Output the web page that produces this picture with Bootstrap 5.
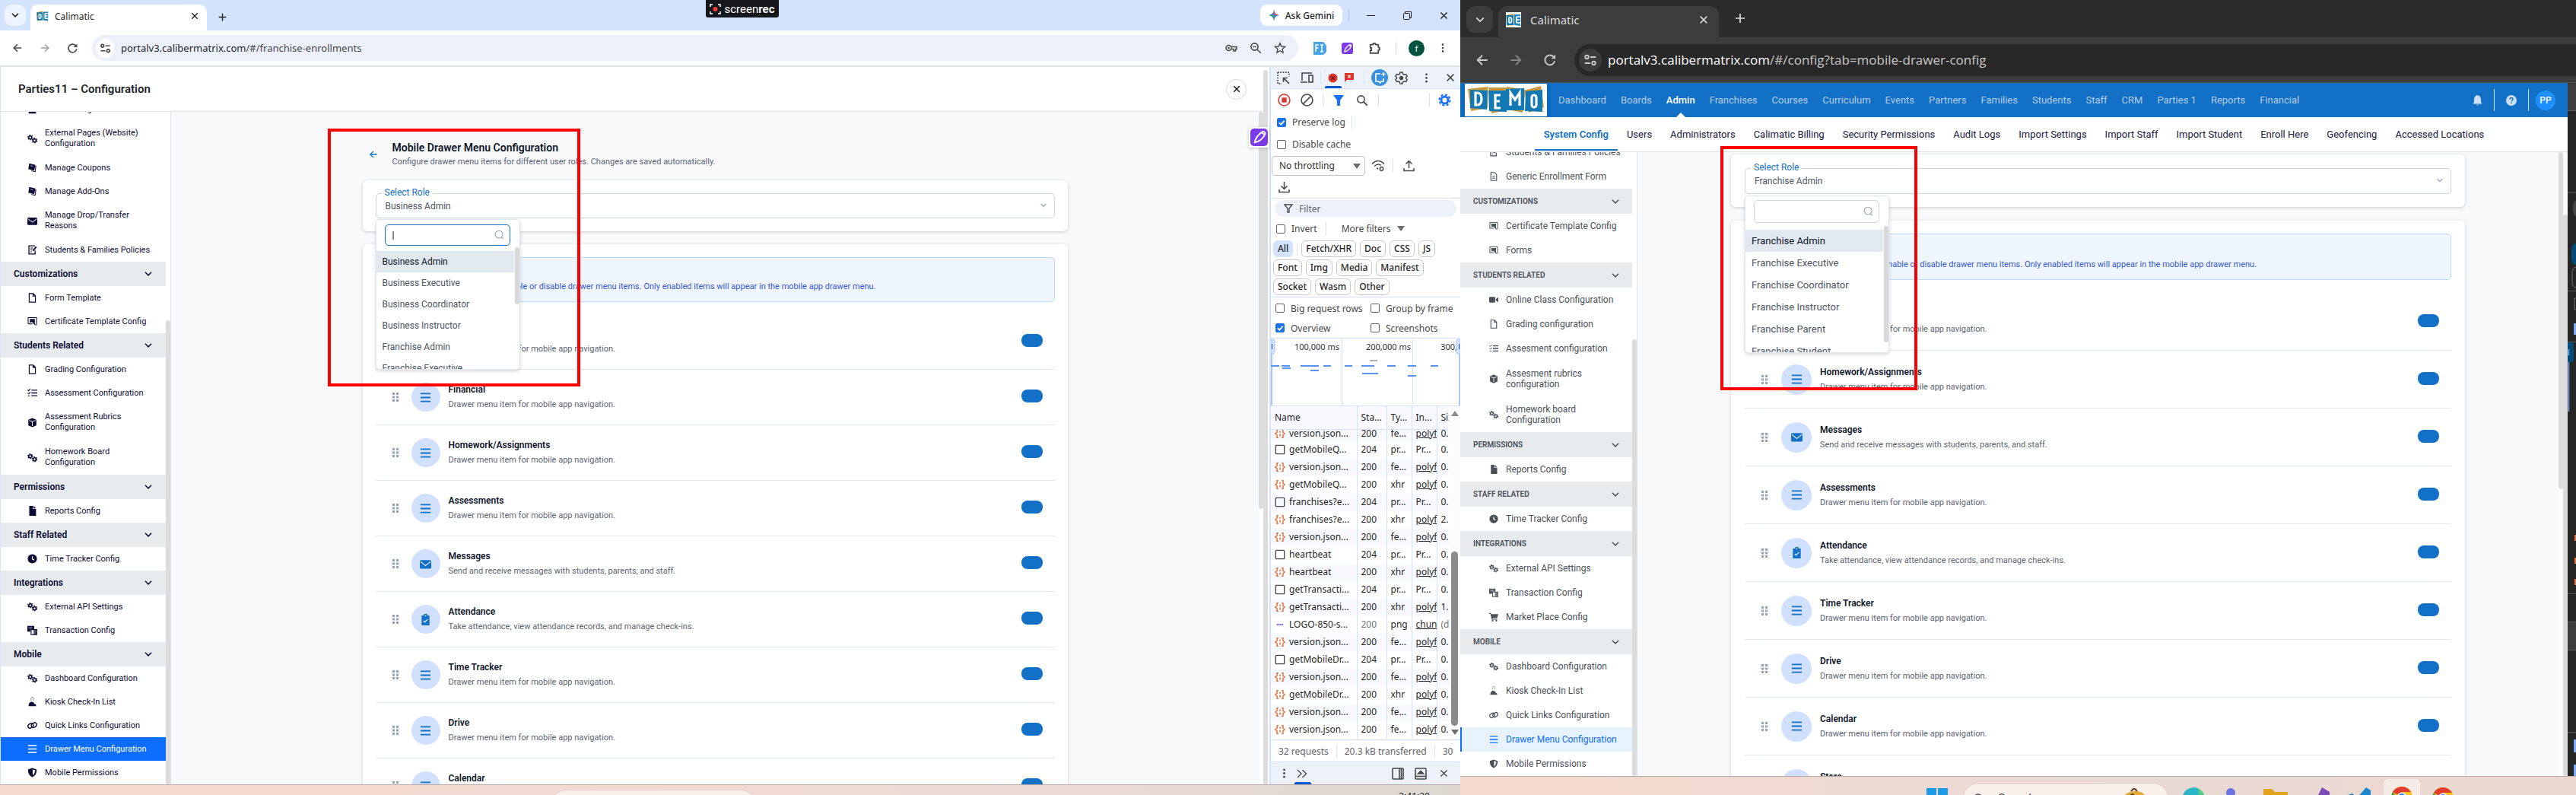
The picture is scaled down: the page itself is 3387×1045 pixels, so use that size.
<!DOCTYPE html>
<html lang="en">
<head>
<meta charset="utf-8">
<meta name="viewport" content="width=device-width, initial-scale=1">
<title>Calimatic</title>
<link href="https://cdn.jsdelivr.net/npm/bootstrap@5.3.0/dist/css/bootstrap.min.css" rel="stylesheet">
<style>
:root{--app:Roboto,"Liberation Sans",sans-serif;--ui:"Noto Sans","Open Sans",sans-serif;--brand:#1270c6;--line:#e2e8f0;--thumb:#dcdcdc}
body{height:100vh;overflow:hidden;font-family:var(--app);color:#111827}
svg{display:block;flex:none}
button{line-height:1}
.ic{width:20px;height:20px}
.ic-sm{width:16px;height:16px}
.icon-btn{display:flex;align-items:center;justify-content:center;width:24px;height:24px;padding:0;border:0;background:none;color:inherit;flex:none}
.window-a{flex:1920 1 0}
.window-b{flex:1467 1 0}
.page{flex:1 1 0;min-height:0}

/* browser chrome, light */
.strip-a{height:40px;background:#d3e2fd;padding:6px 10px 0 6px;font:12px var(--ui);color:#1f1f1f}
.search-tab{width:28px;height:28px;border-radius:9px;background:#edf3ff}
.tab-a{width:232px;height:34px;margin-left:6px;padding:0 4px 4px 8px;border-radius:10px 10px 0 0;background:#fff}
.gemini{width:108px;height:28px;border-radius:9px;background:#fff;font-weight:500}
.tools-a{height:48px;padding:0 11px;border-bottom:2px solid #dfe3e8;font:13px var(--ui);color:#474747}
.omni-a{height:34px;border-radius:17px;background:#ecf0fa;padding:0 12px 0 5px;margin-left:14px}
.tune-a{width:25px;height:25px;border-radius:50%;background:#fff}
.rec-badge{left:928px;top:0;width:96px;height:23px;border-radius:0 0 3px 3px;background:#16171a;color:#fff;font:15px Roboto,sans-serif}
.avatar-f{width:21px;height:21px;border-radius:50%;background:#00523f;color:#fff;font-size:11px}

/* browser chrome, dark */
.strip-b{height:49px;background:#2b2b2b;padding:8px 8px 0;font:15px var(--ui);color:#dedede}
.search-tab-b{width:35px;height:35px;border-radius:11px;background:#3c3c3c}
.tab-b{width:290px;height:41px;margin-left:7px;padding:0 8px 6px 10px;border-radius:12px 12px 0 0;background:#3c3c3c}
.tools-b{height:60px;background:#3c3c3c;padding-left:17px;border-bottom:1px solid #4b4b4b;color:#c7c7c7}
.omni-b{height:42px;border-radius:21px 0 0 21px;background:#282828;margin-left:20px;padding-left:6px;font:17px "Open Sans",var(--ui);color:#c7c7c7}
.tune-b{width:30px;height:30px;border-radius:50%;background:#3c3c3c}

/* application */
.app-head{height:59px;padding:0 22px 0 23px;border-bottom:1px solid #dee2e6;border-left:1px solid #dbe4f3}
.app-head h1{font-size:15px;font-weight:600;line-height:20px;margin:0;color:#212529}
.round-close{width:27px;height:27px;border:1px solid #d5d8dd;border-radius:50%;color:#000}
.side{width:225px;flex:none;border-right:1px solid #dee2e6}
.side-a{border-left:1px solid #dbe4f3;color:#0b0b33}
.side-b{width:233px;color:#4a5058}
.side-list{overflow:hidden;margin:0;padding:0;list-style:none}
.side-head{flex:none;display:flex;align-items:center;justify-content:space-between;height:32px;padding:0 17px;background:#e8ebee;font-size:12px;font-weight:600}
.side-link{flex:none;display:flex;align-items:center;gap:10px;height:31px;padding-left:35px;font-size:11px;line-height:14px;color:inherit;text-decoration:none;white-space:nowrap}
.side-link svg{width:13px;height:13px}
.side-link.tall{height:46px}
.side-a .on{background:#0d6efd;color:#fff}
.side-b .side-head{height:33px;padding-right:16px;font-size:10px}
.side-b .side-link{height:32px;padding-left:38px;font-size:12px}
.side-b .side-link.tall{height:47px}
.side-b .side-link svg{width:12px;height:12px}
.side-b .on{background:#e7f2ff;color:#0d6efd;box-shadow:inset 2px 0 #0d6efd}
.track{width:6px;flex:none}
.thumb{width:6px;border-radius:3px;background:var(--thumb)}
.canvas-bg{background:#f8f9fb;overflow:hidden}
.wrap-a{max-width:927px}
.wrap-b{max-width:965px;padding-top:3px}
.panel{background:#fff;border-radius:6px;box-shadow:0 1px 4px rgba(0,0,0,.18);padding:17px}
.panel + .panel{margin-top:17px;padding-bottom:0}
.page-title{padding:37px 0 15px 7px;gap:18px}
.page-title h2{font-size:14px;line-height:20px;font-weight:600;margin:0;color:#0f172a}
.page-title p{font-size:11px;line-height:18px;margin:0;color:#596273}
.role-select{appearance:none;width:100%;height:33px;border:1px solid #cfd4de;border-radius:5px;background:#fff;padding:0 12px;font-size:12px;color:#4b5563}
.role-label{left:8px;top:-10px;padding:0 4px;background:#fff;color:var(--brand);font-size:12px;line-height:18px}
.role-arrow{right:10px;top:11px;width:10px;height:10px;color:#94a3b8}
.menu-pop{left:0;top:34px;width:190px;height:198px;z-index:3;background:#fff;border:1px solid var(--line);border-radius:5px;box-shadow:0 2px 5px rgba(0,0,0,.16);overflow:hidden}
.menu-pop input{width:100%;height:28px;border:1px solid #cfd4de;border-radius:5px;padding:0 28px 0 9px;font-size:12px;outline:0}
.menu-pop .find-box{padding:6px 12px 7px 11px}
.menu-pop .find-box svg{right:20px;top:13px;width:13px;height:13px;color:#94a3b8}
.menu-a input{border:1px solid var(--brand)}
.opts{list-style:none;margin:0;padding:0;font-size:12px;color:#4b5563}
.opts li{height:28px;line-height:28px;padding-left:8px}
.opts li.picked{margin-right:7px;background:#e2e8f0;color:#0f172a}
.menu-thumb{right:0;width:6px;border-radius:3px;background:#d9d9d9}
.menu-a .menu-thumb{top:36px;height:75px}
.info{height:59px;padding-top:19px;border:1px solid #bfdbfe;border-radius:5px;background:#eff6ff;margin-bottom:16px}
.info p{max-width:657px;text-align:right;font-size:11px;line-height:38px;height:38px;margin:0;color:#3558d4}
.item{height:73px;border-bottom:1px solid var(--line);padding:0 16px 0 22px}
.item .grip{width:8px;height:12px;color:#94a3b8;margin-right:17px}
.disc{width:38px;height:38px;border-radius:50%;background:#d0e0fd;color:var(--brand);margin-right:11px;flex:none}
.disc svg{width:15px;height:15px}
.item h3{font-size:12px;line-height:19px;font-weight:600;margin:0;color:#0f172a}
.item p{font-size:11px;line-height:19px;margin:0;color:#5b6473}
.item .form-check-input{width:28px;height:17px;margin:0 0 3px;border-radius:8px;border:0;background:var(--brand);flex:none}
.wrap-b .panel{padding:18px 18px 17px 18px}
.wrap-b .panel + .panel{margin-top:18px;padding-top:17px;padding-bottom:0}
.wrap-b .role-select{height:34px}
.wrap-b .menu-pop{top:36px;height:207px}
.wrap-b .menu-pop input{height:30px}
.wrap-b .find-box{padding:5px 12px 9px 11px}
.wrap-b .opts{font-size:13px}
.wrap-b .opts li{height:29px;line-height:29px}
.wrap-b .menu-thumb{top:39px;height:153px}
.wrap-b .info{height:61px;margin-bottom:17px}
.wrap-b .info p{max-width:672px;line-height:42px}
.wrap-b .item{height:76px}
.wrap-b .item .grip{margin-right:18px}
.wrap-b .disc{width:40px;height:40px}
.marker{z-index:5;border:4px solid #f00;pointer-events:none}
.marker-a{left:calc(50% - 509px);top:22px;width:332px;height:339px}
.marker-b{left:calc(50% - 497px);top:-8px;width:259px;height:321px}
.float-tool{right:0;top:79px;width:27px;height:27px;background:#fff;padding:2px;box-shadow:0 1px 4px rgba(0,0,0,.2)}

/* top navigation of the portal */
.topnav{height:45px;background:var(--brand);padding:0 16px 0 0;font-size:13px}
.logo-cell{width:119px;height:45px;background:#0b6cbf;padding:1px 0 1px 6px}
.topnav ul,.subnav ul{list-style:none;margin:0;padding:0}
.topnav .menu-a1{color:#b5cde8;text-decoration:none;line-height:45px;display:block}
.topnav .current{color:#fff;font-weight:500;position:relative}
.topnav .current::after{content:"";position:absolute;left:50%;bottom:0;margin-left:-6px;border:6px solid transparent;border-bottom-color:#fff;border-top:0}
.vr-line{width:1px;height:29px;background:#cfe0f3}
.user-dot{width:26px;height:26px;border-radius:50%;background:#1e90ff;color:#fff;font-size:12px;font-weight:500}
.subnav{height:46px;border-bottom:1px solid #dcdee1;font-size:13px}
.subnav a{display:block;padding:0 12px;line-height:45px;height:44px;color:#17173f;text-decoration:none}
.subnav .current{color:var(--brand);font-weight:600;border-bottom:2px solid var(--brand)}
.edge{width:11px;flex:none;background:#252525}

/* developer tools */
.dev{width:251px;flex:none;border-left:2px solid #d3e2fd;font:12px var(--ui);color:#1f1f1f}
.dev .rule{border-bottom:1px solid #d3e2fd}
.dev .sep{width:1px;height:17px;background:#d3e2fd;flex:none}
.dev-bar{height:29px;background:#edf1fa;color:#474747}
.dev-tabs{gap:9px;padding-left:8px}
.dev label,.dev .more{color:#474747;white-space:nowrap}
.dev .tick{appearance:none;width:12px;height:12px;border:1px solid #5f6368;border-radius:2px;margin:0 8px 0 0;flex:none;background:#fff}
.dev .tick:checked{border-color:#1a73e8;background:#1a73e8 url("data:image/svg+xml,%3Csvg xmlns='http://www.w3.org/2000/svg' viewBox='0 0 12 12'%3E%3Cpath d='M2.5 6l2.5 2.5L9.5 3.5' fill='none' stroke='white' stroke-width='1.8'/%3E%3C/svg%3E") center/11px no-repeat}
.throttle{appearance:none;width:123px;height:26px;border:1px solid #c0c3c8;border-radius:4px;padding:0 9px;background:#fff;font:12px var(--ui);color:#303030}
.filter-box{height:22px;border-radius:11px;background:#edf1fa;margin:2px 5px 0 5px;padding-left:12px}
.filter-box input{border:0;background:none;font:12px var(--ui);padding:0;outline:0;width:150px}
.filter-box input::placeholder{color:#5f6368;opacity:1}
.chip{height:22px;border:1px solid #c4c7cc;border-radius:6px;background:#fff;font:500 12px/18px var(--ui);padding:0 5px;color:#1f1f1f}
.chip.sel{background:#d3e2fd;border-color:#d3e2fd}
.net{table-layout:fixed;width:235px;border-collapse:collapse;margin:0}
.net th{font-weight:400;height:30px;background:#f8faff;border-bottom:1px solid #d3e2fd}
.net th,.net td{padding:0 0 0 5px;border-right:1px solid #d3e2fd;overflow:hidden;white-space:nowrap;line-height:20px}
.net th:last-child,.net td:last-child{border-right:0}
.net td{height:23px}
.net tbody tr:nth-child(odd){background:#f8faff}
.net tr.cut td{height:15px}
.net tr.cut td > div{height:15px;overflow:hidden;display:flex;align-items:flex-end!important}
.net a{color:#1f1f1f}
.net .file-ic{width:14px;height:14px;margin-right:5px}
.net tr.cut .file-ic{margin-bottom:3px}
.dev-scroll{width:15px;flex:none;background:#fcfcfc;padding:6px 3px}
.dev-scroll .bar-thumb{width:9px;height:229px;margin:auto 0 5px;border-radius:5px;background:#8b8b8b}
.arrow-up,.arrow-down{width:0;height:0;border:5px solid transparent}
.arrow-up{border-bottom:7px solid #8b8b8b;border-top:0}
.arrow-down{border-top:7px solid #6b6b6b;border-bottom:0}

/* taskbar */
.task-a{height:14px;border-top:1px solid #b9aaa7;background:linear-gradient(90deg,#f5dad0,#f3dbd3 45%,#e9d9d5 80%,#dcd8cf);overflow:hidden}
.task-b{height:25px;border-top:1px solid #b9aaa7;background:linear-gradient(90deg,#f6dacd,#f1dad2 25%,#e9d9d4 60%,#ecd8d0);overflow:hidden}
.task-pill{width:270px;height:40px;border-radius:20px;background:#f8efeb;border:1px solid #e2cfc8;margin-top:6px;font-size:16px;color:#555}
</style>
</head>
<body class="d-flex">
<svg width="0" height="0" class="position-absolute" aria-hidden="true">
<defs>
<symbol id="i-down" viewBox="0 0 16 16"><path d="M2.5 5l5.5 5.500L13.500 5" fill="none" stroke="currentColor" stroke-width="1.900"/></symbol>
<symbol id="i-x" viewBox="0 0 16 16"><path d="M3 3l10 10M13 3L3 13" fill="none" stroke="currentColor" stroke-width="1.700"/></symbol>
<symbol id="i-plus" viewBox="0 0 16 16"><path d="M8 2v12M2 8h12" fill="none" stroke="currentColor" stroke-width="1.700"/></symbol>
<symbol id="i-back" viewBox="0 0 16 16"><path d="M14 8H3M8 2.500L2.500 8L8 13.500" fill="none" stroke="currentColor" stroke-width="1.800"/></symbol>
<symbol id="i-fwd" viewBox="0 0 16 16"><path d="M2 8h11M8 2.500L13.500 8L8 13.500" fill="none" stroke="currentColor" stroke-width="1.800"/></symbol>
<symbol id="i-reload" viewBox="0 0 16 16"><path d="M13.500 9A5.700 5.700 0 1 1 12 4l2 2" fill="none" stroke="currentColor" stroke-width="1.700"/><path d="M14.300 1.500v5h-5z" fill="currentColor"/></symbol>
<symbol id="i-tune" viewBox="0 0 16 16"><g fill="none" stroke="currentColor" stroke-width="1.700"><circle cx="4" cy="4.500" r="2"/><path d="M8 4.500h6.500M1.500 11.500H8"/><circle cx="12" cy="11.500" r="2"/></g></symbol>
<symbol id="i-dots" viewBox="0 0 16 16"><g fill="currentColor"><circle cx="8" cy="3" r="1.500"/><circle cx="8" cy="8" r="1.500"/><circle cx="8" cy="13" r="1.500"/></g></symbol>
<symbol id="i-search" viewBox="0 0 16 16"><circle cx="6.500" cy="6.500" r="4.600" fill="none" stroke="currentColor" stroke-width="1.600"/><path d="M10 10l4.700 4.700" stroke="currentColor" stroke-width="1.800"/></symbol>
<symbol id="i-zoomout" viewBox="0 0 16 16"><circle cx="6.500" cy="6.500" r="4.600" fill="none" stroke="currentColor" stroke-width="1.600"/><path d="M10 10l4.700 4.700M4.500 6.500h4" stroke="currentColor" stroke-width="1.600"/></symbol>
<symbol id="i-lens" viewBox="0 0 16 16"><circle cx="7.500" cy="7.500" r="6" fill="none" stroke="currentColor" stroke-width="1.300"/><path d="M11.500 12l3 3" stroke="currentColor" stroke-width="1.400"/></symbol>
<symbol id="i-star" viewBox="0 0 16 16"><path d="M8 1.800l1.800 4.200 4.700.4-3.500 3.100 1 4.600-4-2.400-4 2.400 1-4.600L1.500 6.400l4.700-.4z" fill="none" stroke="currentColor" stroke-width="1.400"/></symbol>
<symbol id="i-key" viewBox="0 0 16 16"><g fill="none" stroke="currentColor" stroke-width="1.500"><circle cx="4.500" cy="8" r="3.500"/><path d="M8 6.500h7v3h-1.500v2.500h-2.500V9.500H8"/></g><circle cx="4.500" cy="8" r="1.300" fill="currentColor"/></symbol>
<symbol id="i-puzzle" viewBox="0 0 16 16"><path d="M2.500 3.500H6V2h3v1.500h3.500V7H14v3h-1.500v4h-10v-3.500H4v-3H2.500z" fill="none" stroke="currentColor" stroke-width="1.600" stroke-linejoin="round"/></symbol>
<symbol id="i-gears" viewBox="0 0 16 16"><g fill="none" stroke="currentColor"><circle cx="4.600" cy="5.800" r="2.400" stroke-width="1.900"/><circle cx="4.600" cy="5.800" r="3.800" stroke-width="1.500" stroke-dasharray="1.990 1.990"/><circle cx="11.600" cy="10.800" r="2.400" stroke-width="1.900"/><circle cx="11.600" cy="10.800" r="3.800" stroke-width="1.500" stroke-dasharray="1.990 1.990"/></g></symbol>
<symbol id="i-ticket" viewBox="0 0 16 16"><path d="M3 1l10 2.500-2 9L1.500 10z" fill="currentColor"/><path d="M13 4.500l1.500.5-1.500 10-7-1.500.5-1 5.500 1z" fill="currentColor"/><path d="M5 4.500l4 1" stroke="#fff" stroke-width=".8"/></symbol>
<symbol id="i-mail" viewBox="0 0 16 16"><rect y="2.500" width="16" height="12" rx="1.800" fill="currentColor"/><path d="M1 4.500l7 5.500 7-5.500" fill="none" stroke="#d9e5fb" stroke-width="1.300"/></symbol>
<symbol id="i-edit" viewBox="0 0 16 16"><path d="M12.500 9v5.500h-10v-13h10" fill="none" stroke="currentColor" stroke-width="1.600"/><path d="M5 5h4M5 8h3M5 11h2" stroke="currentColor" stroke-width="1.300"/><path d="M14.500 3L9 9.500" stroke="currentColor" stroke-width="2.400"/></symbol>
<symbol id="i-file" viewBox="0 0 16 16"><path d="M3 1h6.500L13 4.500V15H3zM9.200 1v4H13" fill="none" stroke="currentColor" stroke-width="1.500"/></symbol>
<symbol id="i-doc" viewBox="0 0 16 16"><path d="M3 1h6.500L13 4.500V15H3zM5.500 8h5M5.500 11h5" fill="none" stroke="currentColor" stroke-width="1.500"/></symbol>
<symbol id="i-filesolid" viewBox="0 0 16 16"><path d="M3 0h6v5h5v11H3zM10 0l4 4h-4z" fill="currentColor"/></symbol>
<symbol id="i-cert" viewBox="0 0 16 16"><path d="M1.200 12V1.800h13.600V14" fill="none" stroke="currentColor" stroke-width="1.300"/><path d="M1.200 12h7" stroke="currentColor" stroke-width="1.300"/><path d="M4 4h8v7l2 4-4-3-2-3-4 1z" fill="currentColor"/></symbol>
<symbol id="i-check" viewBox="0 0 16 16"><path d="M6.500 3.500H16M6.500 8H16M6.500 12.500H16" stroke="currentColor" stroke-width="1.700"/><path d="M.5 3l1.500 1.500L5 1.500M.5 8L2 9.500l3-3M1 12.500h3" fill="none" stroke="currentColor" stroke-width="1.300"/></symbol>
<symbol id="i-cube" viewBox="0 0 16 16"><path d="M8 .5l6.500 2.800v9.200L8 15.500l-6.500-3V3.300z" fill="currentColor"/><path d="M3 4.500l5 2 5-2M8 6.500v7" fill="none" stroke="#fff" stroke-width="1.200"/></symbol>
<symbol id="i-clock" viewBox="0 0 16 16"><circle cx="8" cy="8" r="7.500" fill="currentColor"/><path d="M8 4v4.500l3 1.500" fill="none" stroke="#fff" stroke-width="1.500"/></symbol>
<symbol id="i-trans" viewBox="0 0 16 16"><path d="M0 1h11v5H5v4H0z" fill="currentColor"/><path d="M2 4h6" stroke="#fff"/><path d="M6 7h9.500v8H6z" fill="none" stroke="currentColor" stroke-width="1.400"/><path d="M10 7h5v8h-5z" fill="currentColor" opacity=".7"/></symbol>
<symbol id="i-person" viewBox="0 0 16 16"><path d="M6 6V2.500a2 2 0 0 1 4 0V6" fill="none" stroke="currentColor" opacity=".6"/><path d="M2 15c0-5 2.500-7 5-7s3.500 1 4 3l3 1.500V15z" fill="currentColor"/></symbol>
<symbol id="i-link" viewBox="0 0 16 16"><g fill="none" stroke="currentColor" stroke-width="1.700"><rect x="1" y="5.500" width="9" height="6.500" rx="3.200" transform="rotate(-35 5 9)"/><rect x="6" y="4" width="9" height="6.500" rx="3.200" transform="rotate(-35 11 7)"/></g></symbol>
<symbol id="i-bars" viewBox="0 0 16 16"><path d="M1 2.500h14M1 8h14M1 13.500h14" stroke="currentColor" stroke-width="1.900"/></symbol>
<symbol id="i-shield" viewBox="0 0 16 16"><path d="M8 .5L15 3c0 6-2 10-7 12.500C3 13 1 9 1 3z" fill="currentColor"/><path d="M8.500 3l4 1.300c-.2 3.500-1.500 6.500-4 8.200z" fill="#fff"/></symbol>
<symbol id="i-cart" viewBox="0 0 16 16"><path d="M0 1h3l.5 2H16l-2 6.500H5.500L5.800 11H14v1.500H4.500L2.200 2.500H0z" fill="currentColor"/><circle cx="6" cy="14.500" r="1.500" fill="currentColor"/><circle cx="12.500" cy="14.500" r="1.500" fill="currentColor"/></symbol>
<symbol id="i-video" viewBox="0 0 16 16"><rect y="3" width="10.500" height="10" rx="1.500" fill="currentColor"/><path d="M11.500 7L16 3.500v9L11.500 9z" fill="currentColor"/></symbol>
<symbol id="i-clip" viewBox="0 0 16 16"><path d="M2.500 2h3a2.500 2.500 0 0 1 5 0h3v14h-11z" fill="currentColor"/><path d="M5 9.500l2 2 4-4" fill="none" stroke="#d0e0fd" stroke-width="1.500"/><circle cx="8" cy="2.500" r="1" fill="#d0e0fd"/></symbol>
<symbol id="i-grip" viewBox="0 0 8 12"><path d="M0 0h3v3H0zM5 0h3v3H5zM0 4.500h3v3H0zM5 4.500h3v3H5zM0 9h3v3H0zM5 9h3v3H5z" fill="currentColor"/></symbol>
<symbol id="i-pen" viewBox="0 0 24 24"><rect width="24" height="24" rx="5" fill="#7c3aed"/><path d="M6 19c1-7 5-11 11-15 3 0 4 2 3 4-3 6-7 10-14 11zM15 5l5 4" fill="none" stroke="#fff" stroke-width="2"/></symbol>
<symbol id="i-gear" viewBox="0 0 16 16"><circle cx="8" cy="8" r="4.200" fill="none" stroke="currentColor" stroke-width="2.600"/><circle cx="8" cy="8" r="6.600" fill="none" stroke="currentColor" stroke-width="2" stroke-dasharray="2.960 2.225"/></symbol>
<symbol id="i-geart" viewBox="0 0 16 16"><path d="M6.500 1h3l.5 2 1.700 1 2-.6 1.500 2.600L13.700 7.500v1l1.500 1.500-1.500 2.600-2-.6-1.700 1-.5 2h-3L6 13l-1.700-1-2 .6L.8 10l1.500-1.500v-1L.8 6l1.500-2.600 2 .6L6 3z" fill="none" stroke="currentColor" stroke-width="1.400"/><circle cx="8" cy="8" r="2.500" fill="currentColor"/></symbol>
<symbol id="i-json" viewBox="0 0 16 16"><path d="M5.500 2H3.500v4L1 8l2.500 2v4h2M10.500 2h2v4L15 8l-2.500 2v4h-2" fill="none" stroke="#e8713a" stroke-width="1.700"/><circle cx="8" cy="5.500" r="1.200" fill="#e8713a"/><path d="M8 8.500v3.500" stroke="#e8713a" stroke-width="1.800"/></symbol>
<symbol id="i-box" viewBox="0 0 16 16"><rect x="1.500" y="1.500" width="13" height="13" rx="1" fill="none" stroke="#474747" stroke-width="1.500"/></symbol>
<symbol id="i-png" viewBox="0 0 16 16"><path d="M3 8h10" stroke="#7a6cf0" stroke-width="2.500" stroke-dasharray="2 .6"/></symbol>
<symbol id="i-fav" viewBox="0 0 20 20"><rect width="20" height="20" fill="#fff"/><path d="M0 4l10-2v15L1 18z" fill="#c99b35"/><path d="M1 4h9v13H1z" fill="#1478b5"/><path d="M11 3h8v15l-8-1z" fill="#1b83bd"/><path d="M4 7v7M4 7h1.500q2 0 2 3.500t-2 3.500H4M14 6v8M14 6h5M14 10h4M14 14h5" fill="none" stroke="#fff" stroke-width="1.700"/></symbol>
<symbol id="i-chrome" viewBox="0 0 28 28"><circle cx="14" cy="14" r="14" fill="#fbc116"/><path d="M14 14L1.900 7A14 14 0 0 1 26.100 7H14z" fill="#e33b2e"/><path d="M1.900 7A14 14 0 0 0 14 28l5-10-10-1z" fill="#2ba24c"/><circle cx="14" cy="14" r="6.500" fill="#fff"/><circle cx="14" cy="14" r="5" fill="#3b7ded"/></symbol>
</defs>
</svg>

<!-- left window -->
<section class="window-a d-flex flex-column position-relative">
  <div class="strip-a d-flex align-items-start">
    <button class="icon-btn search-tab" aria-label="Search tabs"><svg width="12" height="12"><use href="#i-down"/></svg></button>
    <div class="tab-a d-flex align-items-center"><svg class="ic-sm me-2"><use href="#i-fav"/></svg><span>Calimatic</span><button class="icon-btn ms-auto" aria-label="Close tab"><svg width="12" height="12"><use href="#i-x"/></svg></button></div>
    <button class="icon-btn ms-2 mt-1" aria-label="New tab"><svg width="13" height="13"><use href="#i-plus"/></svg></button>
    <div class="d-flex align-items-center ms-auto gap-2">
      <button class="gemini btn p-0 border-0 d-flex align-items-center justify-content-center gap-2"><svg width="14" height="14" viewBox="0 0 16 16"><path d="M8 0q1 7 8 8-7 1-8 8-1-7-8-8 7-1 8-8" fill="#3b7ded"/><path d="M8 0q1 7 8 8H8z" fill="#e94d3f"/><path d="M0 8q7 1 8 8V8z" fill="#36a852"/></svg><span style="font:500 12px var(--ui)">Ask Gemini</span></button>
      <span class="vr-line" style="height:16px;background:#a8c7fa"></span>
      <button class="icon-btn ms-2 me-3" aria-label="Minimise"><svg width="11" height="11"><path d="M0 5.500h11" stroke="#1f1f1f"/></svg></button>
      <button class="icon-btn me-3" aria-label="Restore"><svg width="11" height="11" fill="none" stroke="#1f1f1f"><rect x=".5" y="2.500" width="8" height="8" rx="1"/><path d="M2.500 2.500v-2h8v8h-2"/></svg></button>
      <button class="icon-btn" aria-label="Close"><svg width="13" height="13"><use href="#i-x"/></svg></button>
    </div>
  </div>
  <div class="rec-badge position-absolute d-flex align-items-center justify-content-center gap-1"><svg width="15" height="14" viewBox="0 0 15 14" fill="none"><path d="M4 1H1v3M11 1h3v3M4 13H1v-3M11 13h3v-3" stroke="#fff" stroke-width="1.500"/><circle cx="7.500" cy="7" r="3" fill="#f23b3b"/></svg><span>screen<b>rec</b></span></div>
  <div class="tools-a d-flex align-items-center">
    <button class="icon-btn" aria-label="Back"><svg width="14" height="14"><use href="#i-back"/></svg></button>
    <button class="icon-btn opacity-50" style="margin-left:12px" aria-label="Forward"><svg width="14" height="14"><use href="#i-fwd"/></svg></button>
    <button class="icon-btn" style="margin-left:12px" aria-label="Reload"><svg width="15" height="15"><use href="#i-reload"/></svg></button>
    <div class="omni-a d-flex align-items-center flex-grow-1">
      <span class="tune-a d-flex align-items-center justify-content-center me-2"><svg width="15" height="15"><use href="#i-tune"/></svg></span>
      <span class="flex-grow-1"><span class="text-dark">portalv3.calibermatrix.com</span>/#/franchise-enrollments</span>
      <button class="icon-btn me-2" aria-label="Passwords"><svg class="ic-sm"><use href="#i-key"/></svg></button>
      <button class="icon-btn me-2" aria-label="Zoom"><svg class="ic-sm"><use href="#i-zoomout"/></svg></button>
      <button class="icon-btn" aria-label="Bookmark"><svg class="ic-sm"><use href="#i-star"/></svg></button>
    </div>
    <div class="d-flex align-items-center ms-3" style="gap:12px">
      <button class="icon-btn" aria-label="Form extension"><svg width="17" height="17" viewBox="0 0 17 17"><path d="M0 0h13l4 5v8l-4 4H0z" fill="#45a3e5"/><path d="M3 13V4h4M3 8h3.500M9 4h4M9 13h4M11 4v9" fill="none" stroke="#fff" stroke-width="1.500"/></svg></button>
      <button class="icon-btn" aria-label="Pen extension"><svg width="15" height="15"><use href="#i-pen"/></svg></button>
      <button class="icon-btn" aria-label="Extensions"><svg width="17" height="17"><use href="#i-puzzle"/></svg></button>
      <span class="vr-line mx-1" style="height:16px;background:#c9daf8"></span>
      <span class="avatar-f d-flex align-items-center justify-content-center">f</span>
      <button class="icon-btn" aria-label="Menu"><svg width="14" height="14"><use href="#i-dots"/></svg></button>
    </div>
  </div>

  <div class="page d-flex">
    <div class="d-flex flex-column flex-grow-1 position-relative">
      <div class="d-flex page" style="padding-right:2px">
        <div class="d-flex flex-column flex-grow-1">
          <header class="app-head d-flex align-items-center justify-content-between flex-shrink-0">
            <h1>Parties11 – Configuration</h1>
            <button class="icon-btn round-close" aria-label="Close"><svg width="12" height="12"><use href="#i-x"/></svg></button>
          </header>
          <div class="page d-flex">
            <nav class="side side-a d-flex" aria-label="Configuration"><ul class="side-list flex-grow-1 d-flex flex-column justify-content-end" id="sideA"></ul><div class="track d-flex align-items-end"><div class="thumb" style="height:69%"></div></div></nav>
            <main class="canvas-bg flex-grow-1 position-relative">
              <div class="wrap-a mx-auto">
                <div class="page-title d-flex align-items-center">
                  <a href="#" aria-label="Back" style="color:var(--brand)"><svg width="14" height="12"><use href="#i-back"/></svg></a>
                  <div><h2>Mobile Drawer Menu Configuration</h2><p>Configure drawer menu items for different user roles. Changes are saved automatically.</p></div>
                </div>
                <div class="panel">
                  <div class="position-relative">
                    <select class="role-select d-block" id="roleA"><option>Business Admin</option></select>
                    <label class="role-label position-absolute" for="roleA">Select Role</label>
                    <svg class="role-arrow position-absolute"><use href="#i-down"/></svg>
                    <div class="menu-pop menu-a position-absolute">
                      <div class="find-box position-relative"><input type="text" value="|" aria-label="Search roles"><svg class="position-absolute"><use href="#i-lens"/></svg></div>
                      <ul class="opts" id="optsA"></ul><div class="menu-thumb position-absolute"></div>
                    </div>
                  </div>
                </div>
                <div class="panel"><div class="info"><p>Enable or disable drawer menu items. Only enabled items will appear in the mobile app drawer menu.</p></div><div id="rowsA"></div></div>
              </div>
              <div class="marker marker-a position-absolute"></div>
            </main>
            <div class="track"><div class="thumb" style="height:59%"></div></div>
          </div>
        </div>
        <div class="track pt-1"><div class="thumb h-100"></div></div>
      </div>
      <button class="float-tool position-absolute border-0" aria-label="Pen"><svg width="23" height="23"><use href="#i-pen"/></svg></button>
    </div>

    <aside class="dev d-flex flex-column">
      <div class="dev-bar dev-tabs rule d-flex align-items-center position-relative">
        <svg width="17" height="17" viewBox="0 0 16 16" fill="none" stroke="currentColor" stroke-width="1.600"><path d="M1 1h14v5M1 1v14h5" stroke-dasharray="1.600 1.500"/><path d="M15 15L8 8M8 13V8h5"/></svg>
        <svg class="ms-1" width="18" height="16" viewBox="0 0 18 16" fill="none" stroke="currentColor" stroke-width="1.600"><path d="M3 12V2h13M1 14h9"/><rect x="12" y="5" width="5" height="9"/></svg>
        <span class="sep"></span>
        <svg width="13" height="13" viewBox="0 0 13 13"><circle cx="6.500" cy="6.500" r="6" fill="#dc362e"/><path d="M4 4l5 5M9 4L4 9" stroke="#7a1a15" stroke-width="1.500"/></svg>
        <svg width="12" height="12" viewBox="0 0 12 12"><path d="M0 0h12v9H3l-3 3z" fill="#dc362e"/><path d="M4.500 3l3 3M7.500 3l-3 3" stroke="#fff" stroke-width="1.200"/></svg>
        <span class="sep ms-1"></span>
        <svg width="22" height="22" viewBox="0 0 22 22"><circle cx="11" cy="11" r="11" fill="#3a8fe0"/><path d="M12 6H6v10h4l1.500 2 1.500-2h3v-4" fill="none" stroke="#fff" stroke-width="1.600"/><path d="M16 4v5M13.500 6.500h5" stroke="#fff" stroke-width="1.400"/></svg>
        <svg width="17" height="17"><use href="#i-geart"/></svg><svg class="ms-2" width="15" height="15"><use href="#i-dots"/></svg><svg class="ms-2" width="14" height="14"><use href="#i-x"/></svg>
        <span class="position-absolute bottom-0" style="left:71px;width:22px;height:3px;background:#0b57d0;border-radius:2px 2px 0 0"></span>
      </div>
      <div class="d-flex align-items-center" style="height:29px;padding:0 12px 0 9px;color:#474747">
        <svg width="17" height="17" viewBox="0 0 16 16"><circle cx="8" cy="8" r="7" fill="none" stroke="#dc362e" stroke-width="1.500"/><rect x="5" y="5" width="6" height="6" fill="#dc362e"/></svg>
        <svg width="17" height="17" viewBox="0 0 16 16" fill="none" stroke="currentColor" stroke-width="1.500" style="margin:0 12px 0 13px"><circle cx="8" cy="8" r="7"/><path d="M3 13L13 3"/></svg>
        <span class="sep"></span>
        <svg width="14" height="15" viewBox="0 0 14 15" style="margin:0 16px 0 13px"><path d="M0 1h14L9 8v7H5V8z" fill="#1a6ff5"/></svg>
        <svg class="ic-sm"><use href="#i-search"/></svg>
        <span class="sep" style="margin-left:13px"></span><span class="sep ms-auto" style="margin-right:11px"></span>
        <svg width="17" height="17" style="color:#1a6ff5"><use href="#i-gear"/></svg>
      </div>
      <div class="d-flex align-items-center" style="height:29px;padding-left:8px"><input class="tick" type="checkbox" id="c1" checked><label for="c1">Preserve log</label><span class="sep ms-2"></span></div>
      <div class="d-flex align-items-center" style="height:29px;padding-left:8px"><input class="tick" type="checkbox" id="c2"><label for="c2">Disable cache</label></div>
      <div class="d-flex align-items-center" style="height:27px;padding-left:1px;color:#474747">
        <div class="position-relative"><select class="throttle" aria-label="Throttling"><option>No throttling</option></select><span class="arrow-down position-absolute" style="right:6px;top:10px"></span></div>
        <svg width="18" height="16" viewBox="0 0 18 16" fill="none" stroke="currentColor" stroke-width="1.500" style="margin:0 10px 0 8px"><path d="M1 5.500q8-8 16 0M4 8.500q5-4.500 9-1M7 11l2 1"/><circle cx="13.500" cy="12" r="2.200"/></svg>
        <span class="sep"></span>
        <svg width="15" height="16" viewBox="0 0 15 16" fill="none" stroke="currentColor" stroke-width="1.500" style="margin-left:13px"><path d="M7.500 11V2M3.500 5.500l4-4 4 4M1 11v3.500h13V11"/></svg>
      </div>
      <div class="d-flex align-items-center rule" style="height:30px;padding-left:10px;color:#474747"><svg width="15" height="16" viewBox="0 0 15 16" fill="none" stroke="currentColor" stroke-width="1.500"><path d="M7.500 1v9M3.500 6.500l4 4 4-4M1 11v3.500h13V11"/></svg></div>
      <div class="filter-box d-flex align-items-center flex-shrink-0"><svg width="12" height="12" viewBox="0 0 12 12" fill="none" stroke="#474747" stroke-width="1.300"><path d="M1 1h10L7 6v5H5V6z"/></svg><input class="ms-2" type="text" placeholder="Filter" aria-label="Filter"></div>
      <div class="d-flex align-items-center" style="height:31px;padding-left:7px"><input class="tick" type="checkbox" id="c3"><label for="c3">Invert</label><span class="sep" style="margin:0 20px 0 11px"></span><button class="more border-0 bg-transparent p-0 d-flex align-items-center gap-2" style="font:12px var(--ui)">More filters<span class="arrow-down"></span></button></div>
      <div class="d-flex flex-column rule" style="gap:3px;padding:0 3px 2px">
        <div class="d-flex align-items-center" style="gap:5px"><button class="chip sel">All</button><span class="sep"></span><button class="chip">Fetch/XHR</button><button class="chip">Doc</button><button class="chip">CSS</button><button class="chip">JS</button></div>
        <div class="d-flex" style="gap:5px"><button class="chip">Font</button><button class="chip">Img</button><button class="chip">Media</button><button class="chip">Manifest</button></div>
        <div class="d-flex" style="gap:5px"><button class="chip">Socket</button><button class="chip">Wasm</button><button class="chip">Other</button></div>
      </div>
      <div class="d-flex flex-wrap rule" style="padding:1px 0 0 6px">
        <div class="d-flex align-items-center" style="width:125px;height:26px"><input class="tick" type="checkbox" id="c4"><label for="c4">Big request rows</label></div>
        <div class="d-flex align-items-center" style="height:26px"><input class="tick" type="checkbox" id="c5"><label for="c5">Group by frame</label></div>
        <div class="d-flex align-items-center" style="width:125px;height:26px"><input class="tick" type="checkbox" id="c6" checked><label for="c6">Overview</label></div>
        <div class="d-flex align-items-center" style="height:26px"><input class="tick" type="checkbox" id="c7"><label for="c7">Screenshots</label></div>
      </div>
      <svg height="88" viewBox="0 0 249 88" class="w-100" preserveAspectRatio="none">
        <path d="M93.500 0v88M186.500 0v88" stroke="#d3e2fd"/><path d="M1 20v68M248 20v68" stroke="#a8c7fa" stroke-width="2"/>
        <g font-family="Noto Sans" font-size="11" fill="#303030" text-anchor="end"><text x="90" y="15">100,000 ms</text><text x="184" y="15">200,000 ms</text><text x="245" y="15">300,</text></g>
        <path d="M0 1h3q2 0 2 3v13q0 3-2 3H0zM249 1h-3q-2 0-2 3v13q0 3 2 3h3z" fill="#d3e2fd" stroke="#a8c7fa"/><path d="M1.500 7v7M247.500 7v7" stroke="#0b57d0"/>
        <path d="M0 36h11M14 36h11M39 36h24M69 36h10M97 36h10M119 36h17M153 36h11M180 36h11M210 36h10M15 39h11M52 42h11M120 46h21M180 49h11" stroke="#5a93f0" stroke-width="2"/><path d="M130 29h10" stroke="#b0b0b0" stroke-width="2"/>
      </svg>
      <div class="page d-flex border-top" style="border-color:#d3e2fd!important">
        <div class="overflow-hidden" style="width:235px">
          <table class="net"><colgroup><col style="width:113px"><col style="width:39px"><col style="width:33px"><col style="width:33px"><col style="width:17px"></colgroup>
          <thead><tr><th>Name</th><th>Sta...</th><th>Ty...</th><th>In...</th><th>Siz</th></tr></thead><tbody id="net"></tbody></table>
        </div>
        <div class="dev-scroll d-flex flex-column"><span class="arrow-up"></span><div class="bar-thumb"></div><span class="arrow-down"></span></div>
      </div>
      <div class="d-flex align-items-center border-top overflow-hidden text-nowrap flex-shrink-0" style="height:29px;padding-left:10px;border-color:#d3e2fd!important;color:#5f6368"><span>32 requests</span><span class="sep" style="margin:0 10px"></span><span>20.3 kB transferred</span><span class="sep" style="margin:0 10px"></span><span>30</span></div>
      <div class="dev-bar border-top d-flex align-items-center flex-shrink-0 position-relative" style="height:30px;padding:0 15px 0 10px;border-color:#d3e2fd!important">
        <svg width="15" height="15"><use href="#i-dots"/></svg><svg width="14" height="12" viewBox="0 0 14 12" fill="none" stroke="currentColor" stroke-width="1.300" style="margin-left:9px"><path d="M1 1l5 5-5 5M7.500 1l5 5-5 5"/></svg>
        <svg width="16" height="16" viewBox="0 0 16 16" fill="none" stroke="currentColor" stroke-width="1.600" class="ms-auto"><rect x="1" y="1" width="14" height="14" rx="1"/><path d="M10 1v14M12.500 1v14"/></svg>
        <svg width="16" height="16" viewBox="0 0 16 16" fill="none" stroke="currentColor" stroke-width="1.600" style="margin:0 16px 0 14px"><rect x="1" y="1" width="14" height="14" rx="1"/><path d="M1 11.500h14"/><path d="M4.500 8L8 4.500 11.500 8z" fill="currentColor"/></svg>
        <svg width="13" height="13"><use href="#i-x"/></svg>
        <span class="position-absolute bottom-0" style="left:31px;width:22px;height:3px;background:#0b57d0;border-radius:2px 2px 0 0"></span>
      </div>
    </aside>
  </div>
  <footer class="task-a d-flex align-items-start"><span class="task-pill" style="margin-left:724px"></span><span class="ms-auto text-nowrap" style="margin-right:40px;font:12px/30px var(--ui)">3:41:30</span></footer>
</section>

<!-- right window -->
<section class="window-b d-flex flex-column">
  <div class="strip-b d-flex align-items-start">
    <button class="icon-btn search-tab-b" aria-label="Search tabs"><svg width="14" height="14"><use href="#i-down"/></svg></button>
    <div class="tab-b d-flex align-items-center"><svg class="ic me-2"><use href="#i-fav"/></svg><span class="ms-1">Calimatic</span><button class="icon-btn ms-auto" aria-label="Close tab"><svg width="14" height="14"><use href="#i-x"/></svg></button></div>
    <button class="icon-btn ms-3 mt-1" aria-label="New tab"><svg width="16" height="16"><use href="#i-plus"/></svg></button>
  </div>
  <div class="tools-b d-flex align-items-center">
    <button class="icon-btn" aria-label="Back"><svg width="18" height="18"><use href="#i-back"/></svg></button>
    <button class="icon-btn opacity-50" style="margin-left:20px" aria-label="Forward"><svg width="18" height="18"><use href="#i-fwd"/></svg></button>
    <button class="icon-btn" style="margin-left:21px" aria-label="Reload"><svg width="18" height="18"><use href="#i-reload"/></svg></button>
    <div class="omni-b d-flex align-items-center flex-grow-1"><span class="tune-b d-flex align-items-center justify-content-center me-2"><svg width="18" height="18"><use href="#i-tune"/></svg></span><span><span class="text-white">portalv3.calibermatrix.com</span>/#/config?tab=mobile-drawer-config</span></div>
  </div>
  <div class="page d-flex">
    <div class="d-flex flex-column flex-grow-1">
      <div class="topnav d-flex align-items-center flex-shrink-0">
        <div class="logo-cell">
          <svg width="108" height="43" viewBox="0 0 108 43"><rect width="108" height="43" fill="#fff"/><g fill="#c9993a"><path d="M4 7l26-3v28L8 36z"/><path d="M31 5h24v30l-20 4z"/><path d="M55 4l25 4-4 30-20-4z"/><path d="M78 9l22-6 4 28-20 7z"/></g><g fill="#1279b4"><path d="M7 8l23 1-1 25-22-2z"/><path d="M31 9h24v28l-23-1z"/><path d="M54 7l24-1v29H54z"/><path d="M80 10l22-2v29l-23-1z"/></g><g fill="none" stroke="#fff" stroke-width="3.200"><path d="M14 28V12h2q6 0 6 8t-6 8z"/><path d="M47 15h-7v17h7M40 23h6"/><path d="M60 29V12l6 9 6-9v17"/><rect x="88" y="15" width="6" height="16" rx="3"/></g></svg>
        </div>
        <ul class="d-flex" id="topnav" style="gap:19px;margin-left:10px"></ul>
        <div class="d-flex align-items-center ms-auto" style="gap:15px;color:#cfe0f3">
          <svg width="13" height="14" viewBox="0 0 13 14"><path d="M6.500 0q4.500 1 4.500 6v3l1.500 2.500H.5L2 9V6q0-5 4.500-6zM5 12.500h3L6.500 14z" fill="currentColor"/></svg><span class="vr-line"></span>
          <svg width="14" height="14" viewBox="0 0 14 14"><circle cx="7" cy="7" r="7" fill="currentColor"/><path d="M5 5.500q0-2 2-2t2 1.800Q9 6.500 7 8M7 9.500V11" fill="none" stroke="#1270c6" stroke-width="1.500"/></svg><span class="vr-line"></span>
          <span class="user-dot d-flex align-items-center justify-content-center" style="margin-left:-6px">PP</span>
        </div>
      </div>
      <nav class="subnav flex-shrink-0" aria-label="Admin"><ul class="d-flex justify-content-center" id="subnav"></ul></nav>
      <div class="page d-flex">
        <nav class="side side-b d-flex" aria-label="System configuration"><ul class="side-list flex-grow-1 d-flex flex-column justify-content-end" id="sideB"></ul><div class="track d-flex align-items-end"><div class="thumb" style="height:70%"></div></div></nav>
        <div class="flex-grow-1 position-relative d-flex">
          <main class="canvas-bg flex-grow-1">
            <div class="wrap-b mx-auto">
              <div class="panel">
                <div class="position-relative">
                  <select class="role-select d-block" id="roleB"><option>Franchise Admin</option></select>
                  <label class="role-label position-absolute" for="roleB">Select Role</label>
                  <svg class="role-arrow position-absolute"><use href="#i-down"/></svg>
                  <div class="menu-pop position-absolute">
                    <div class="find-box position-relative"><input type="text" aria-label="Search roles"><svg class="position-absolute"><use href="#i-lens"/></svg></div>
                    <ul class="opts" id="optsB"></ul><div class="menu-thumb position-absolute"></div>
                  </div>
                </div>
              </div>
              <div class="panel"><div class="info"><p>Enable or disable drawer menu items. Only enabled items will appear in the mobile app drawer menu.</p></div><div id="rowsB"></div></div>
            </div>
          </main>
          <div class="marker marker-b position-absolute"></div>
        </div>
        <div class="track"><div class="thumb" style="height:54%"></div></div>
        <div class="track d-flex align-items-end"><div class="thumb" style="height:90%"></div></div>
      </div>
    </div>
    <svg class="edge h-100" viewBox="0 0 11 911" preserveAspectRatio="none">
      <path d="M0 0h11v36H0zM0 708h11v37H0z" fill="#3c3c3c"/><path d="M0 36.500h11M0 144.500h11M0 273.500h11M0 340.500h11M0 671.500h11M0 708.500h11M0 745.500h11M0 853.500h11" stroke="#5a5a5a"/>
      <path d="M11 154q-4 2-4 11t4 11z" fill="#454545"/><path d="M11 211q-6 1-6 8v12q0 7 6 8zM0 341h5q3 0 3 4v18q0 4-3 4H0z" fill="#004a77"/><path d="M11 242q-5 1-5 7v13q0 6 5 7M11 283h-2v15h2" fill="none" stroke="#757575"/>
      <path d="M8 316h3v15H8zM8 863h3v17H8zM8 896h3v15H8z" fill="#7cacf8"/><path d="M1.500 350v8M1.500 367v65" stroke="#7cacf8" stroke-width="1.500"/><path d="M9 594h2v8H9zM9 624h2v8H9zM9 652h2v8H9z" fill="#e8713a"/>
    </svg>
  </div>
  <footer class="task-b d-flex align-items-start">
    <svg width="28" height="28" viewBox="0 0 28 28" style="margin:15px 20px 0 613px"><path d="M0 0h13v13H0zM15 0h13v13H15zM0 15h13v13H0zM15 15h13v13H15z" fill="#1d9be6"/></svg>
    <span class="task-pill d-flex position-relative" style="margin-top:8px;padding-left:12px"><svg width="17" height="17" style="margin-top:12px"><use href="#i-search"/></svg><span style="margin:8px 0 0 16px">Search</span>
      <svg width="60" height="30" viewBox="0 0 60 30" style="margin:6px 0 0 90px"><path d="M2 22q4-14 8-6t8-6v14z" fill="#6a9a4b"/><path d="M24 18q2-14 18-14t16 20H28z" fill="#e0a93a"/><path d="M30 12l8-4 6 6 8-2M36 4l4-4 4 4" stroke="#5a4420" stroke-width="2" fill="none"/></svg></span>
    <svg width="30" height="30" viewBox="0 0 30 30" style="margin:14px 0 0 18px"><path d="M15 0a15 15 0 0 1 15 15H14q-8-4-13 3Q-1 2 15 0" fill="#2bb5c9"/><path d="M20 1q9 4 10 14h-9q3-7-1-14" fill="#4fd07c"/></svg>
    <svg width="24" height="30" viewBox="0 0 24 30" style="margin:13px 0 0 28px"><circle cx="6" cy="8" r="6" fill="#6b73e0"/><circle cx="18" cy="17" r="5" fill="#8a80ea"/></svg>
    <svg width="32" height="28" viewBox="0 0 32 28" style="margin:16px 0 0 25px"><path d="M0 0h11l4 4h17v20H0z" fill="#e0a31a"/><path d="M0 8h32v18H0z" fill="#ffd766"/></svg>
    <svg width="30" height="30" viewBox="0 0 30 30" style="margin:14px 0 0 25px"><path d="M0 12l10 8L20 0l10 6v24L0 18z" fill="#7b4bb5"/></svg>
    <svg width="30" height="30" viewBox="0 0 30 30" style="margin:14px 0 0 24px"><path d="M0 10l6-2 6 6L24 0l6 4v26L0 16z" fill="#1b86cf"/></svg>
    <span class="d-flex justify-content-center" style="width:48px;height:40px;margin:3px 0 0 17px;border-radius:6px;background:#f6ebe7;padding-top:10px"><svg width="28" height="28"><use href="#i-chrome"/></svg></span>
    <svg width="28" height="28" style="margin:14px 0 0 16px"><use href="#i-chrome"/></svg>
  </footer>
</section>

<script src="https://cdn.jsdelivr.net/npm/bootstrap@5.3.0/dist/js/bootstrap.bundle.min.js"></script>
<script>
const icon = name => `<svg aria-hidden="true"><use href="#i-${name}"/></svg>`;
const fill = (id, html) => { document.getElementById(id).innerHTML = html; };

// Sidebar entries: a plain string is a section heading, a pair is [icon, label]
const side = list => list.map(e => typeof e === 'string'
  ? `<li class="side-head">${e}<svg width="12" height="12"><use href="#i-down"/></svg></li>`
  : `<li><a href="#" class="side-link${e[1].includes('<br>') ? ' tall' : ''}${e[1].startsWith('Drawer') ? ' on' : ''}">${icon(e[0])}<span>${e[1]}</span></a></li>`).join('');

fill('sideA', side([['person','Class Configuration'],['gears','External Pages (Website)<br>Configuration'],['ticket','Manage Coupons'],['ticket','Manage Add-Ons'],['mail','Manage Drop/Transfer<br>Reasons'],['edit','Students &amp; Families Policies'],
  'Customizations',['file','Form Template'],['cert','Certificate Template Config'],
  'Students Related',['file','Grading Configuration'],['check','Assessment Configuration'],['cube','Assessment Rubrics<br>Configuration'],['gears','Homework Board<br>Configuration'],
  'Permissions',['filesolid','Reports Config'],'Staff Related',['clock','Time Tracker Config'],
  'Integrations',['gears','External API Settings'],['trans','Transaction Config'],
  'Mobile',['gears','Dashboard Configuration'],['person','Kiosk Check-In List'],['link','Quick Links Configuration'],['bars','Drawer Menu Configuration'],['shield','Mobile Permissions']]));
fill('sideB', side([['edit','Students &amp; Families Policies'],['doc','Generic Enrollment Form'],
  'CUSTOMIZATIONS',['cert','Certificate Template Config'],['cert','Forms'],
  'STUDENTS RELATED',['video','Online Class Configuration'],['file','Grading configuration'],['check','Assesment configuration'],['cube','Assesment rubrics<br>configuration'],['gears','Homework board<br>Configuration'],
  'PERMISSIONS',['filesolid','Reports Config'],'STAFF RELATED',['clock','Time Tracker Config'],
  'INTEGRATIONS',['gears','External API Settings'],['trans','Transaction Config'],['cart','Market Place Config'],
  'MOBILE',['gears','Dashboard Configuration'],['person','Kiosk Check-In List'],['link','Quick Links Configuration'],['bars','Drawer Menu Configuration'],['shield','Mobile Permissions']]));

const opts = list => list.map((t, i) => `<li${i ? '' : ' class="picked"'}>${t}</li>`).join('');
fill('optsA', opts(['Business Admin','Business Executive','Business Coordinator','Business Instructor','Franchise Admin','Franchise Executive']));
fill('optsB', opts(['Franchise Admin','Franchise Executive','Franchise Coordinator','Franchise Instructor','Franchise Parent','Franchise Student']));

const special = {Messages: ['mail','Send and receive messages with students, parents, and staff.'], Attendance: ['clip','Take attendance, view attendance records, and manage check-ins.']};
const rows = list => list.map(t => {
  const [ic, text] = special[t] || ['bars','Drawer menu item for mobile app navigation.'];
  return `<div class="item d-flex align-items-center"><svg class="grip"><use href="#i-grip"/></svg><span class="disc d-flex align-items-center justify-content-center">${icon(ic)}</span><div class="flex-grow-1"><h3>${t}</h3><p>${text}</p></div><input class="form-check-input" type="checkbox" role="switch" checked aria-label="${t}"></div>`;
}).join('');
fill('rowsA', rows(['Dashboard','Financial','Homework/Assignments','Assessments','Messages','Attendance','Time Tracker','Drive','Calendar']));
fill('rowsB', rows(['Financial','Homework/Assignments','Messages','Assessments','Attendance','Time Tracker','Drive','Calendar','Store']));

fill('topnav', ['Dashboard','Boards','Admin','Franchises','Courses','Curriculum','Events','Partners','Families','Students','Staff','CRM','Parties 1','Reports','Financial'].map(t => `<li><a href="#" class="menu-a1${t === 'Admin' ? ' current' : ''}">${t}</a></li>`).join(''));
fill('subnav', ['System Config','Users','Administrators','Calimatic Billing','Security Permissions','Audit Logs','Import Settings','Import Staff','Import Student','Enroll Here','Geofencing','Accessed Locations'].map((t, i) => `<li><a href="#"${i ? '' : ' class="current"'}>${t}</a></li>`).join(''));

// Requests: name, status, type, initiator, size
const P = 'polyf', net = [['version.json...',200,'fe...',P,'0..'],['getMobileQ...',204,'pr...','Pr...','0..'],['version.json...',200,'fe...',P,'0..'],['getMobileQ...',200,'xhr',P,'0..'],['franchises?e...',204,'pr...','Pr...','0..'],['franchises?e...',200,'xhr',P,'2..'],['version.json...',200,'fe...',P,'0..'],['heartbeat',204,'pr...','Pr...','0..'],['heartbeat',200,'xhr',P,'0..'],['getTransacti...',204,'pr...','Pr...','0..'],['getTransacti...',200,'xhr',P,'1..'],['LOGO-850-s...',200,'png','chun','(d'],['version.json...',200,'fe...',P,'0..'],['getMobileDr...',204,'pr...','Pr...','0..'],['version.json...',200,'fe...',P,'0..'],['getMobileDr...',200,'xhr',P,'0..'],['version.json...',200,'fe...',P,'0..'],['version.json...',200,'fe...',P,'0..']];
fill('net', net.map(([n, s, t, i, z], k) => {
  const ic = s === 204 ? 'box' : t === 'png' ? 'png' : 'json', link = i.startsWith('Pr') ? i : `<a href="#">${i}</a>`, cls = t === 'png' ? ' class="text-secondary"' : '';
  return `<tr${k ? '' : ' class="cut"'}><td><div class="d-flex align-items-center"><svg class="file-ic"><use href="#i-${ic}"/></svg>${n}</div></td><td${cls}><div>${s}</div></td><td><div>${t}</div></td><td><div>${link}</div></td><td${cls}><div>${z}</div></td></tr>`;
}).join(''));
</script>
</body>
</html>
